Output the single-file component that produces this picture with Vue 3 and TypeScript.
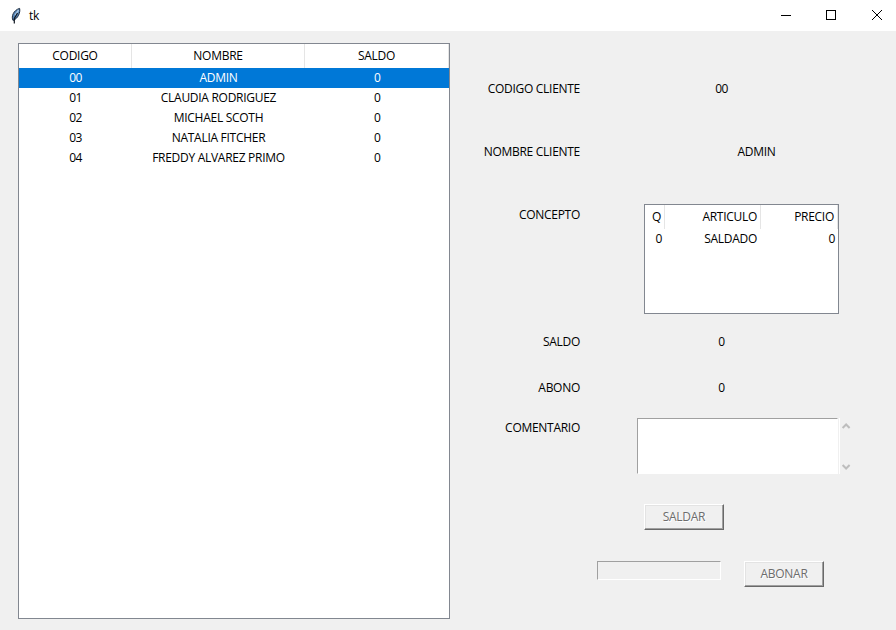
<script setup lang="ts">
interface Cliente {
  codigo: string
  nombre: string
  saldo: number
}

const clientes: Cliente[] = [
  { codigo: '00', nombre: 'ADMIN', saldo: 0 },
  { codigo: '01', nombre: 'CLAUDIA RODRIGUEZ', saldo: 0 },
  { codigo: '02', nombre: 'MICHAEL SCOTH', saldo: 0 },
  { codigo: '03', nombre: 'NATALIA FITCHER', saldo: 0 },
  { codigo: '04', nombre: 'FREDDY ALVAREZ PRIMO', saldo: 0 },
]
const selected = clientes[0]
</script>

<template>
  <div class="window">
    <header class="titlebar">
      <svg class="feather" width="12" height="18" viewBox="0 0 12 18">
        <path d="M3 13.4C1 9.6 3.4 3.2 9.6 1.4C10.6 5.4 8 11.6 3 13.4Z" fill="#5584b5" stroke="#1d2c40" stroke-width="1" />
        <path d="M5 8.5L8.6 3" stroke="#a9c8e6" stroke-width="1.4" fill="none" />
        <path d="M4.3 16.4V11.5L7.5 6" stroke="#10161f" stroke-width="1.2" fill="none" />
      </svg>
      <span class="title">tk</span>
      <div class="controls">
        <svg width="46" height="31" viewBox="0 0 46 31"><path d="M18 15.5H28" stroke="#000" /></svg>
        <svg width="46" height="31" viewBox="0 0 46 31"><rect x="17.5" y="10.5" width="9" height="9" fill="none" stroke="#000" /></svg>
        <svg width="46" height="31" viewBox="0 0 46 31"><path d="M17 10L27 20M27 10L17 20" stroke="#000" /></svg>
      </div>
    </header>

    <main class="client">
      <section class="tree clients">
        <div class="head">
          <span>CODIGO</span><span>NOMBRE</span><span>SALDO</span>
        </div>
        <div v-for="c in clientes" :key="c.codigo" class="item" :class="{ selected: c === selected }">
          <span class="digits">{{ c.codigo }}</span><span>{{ c.nombre }}</span><span class="digits">{{ c.saldo }}</span>
        </div>
      </section>

      <section class="form">
        <div class="field code">
          <span class="label">CODIGO CLIENTE</span><span class="value digits">{{ selected.codigo }}</span>
        </div>
        <div class="field customer">
          <span class="label">NOMBRE CLIENTE</span><span class="value wide">{{ selected.nombre }}</span>
        </div>
        <div class="field concept">
          <span class="label">CONCEPTO</span>
          <div class="tree articles">
            <div class="head"><span>Q</span><span>ARTICULO</span><span>PRECIO</span></div>
            <div class="item"><span>0</span><span>SALDADO</span><span>0</span></div>
          </div>
        </div>
        <div class="field balance">
          <span class="label">SALDO</span><span class="value">0</span>
        </div>
        <div class="field payment">
          <span class="label">ABONO</span><span class="value">0</span>
        </div>
        <div class="field comment">
          <span class="label">COMENTARIO</span>
          <div class="textbox"></div>
          <div class="scroll">
            <svg width="10" height="8" viewBox="0 0 10 8"><path d="M1.6 6L5.1 2.5L8.6 6" fill="none" stroke="#bdbdbd" stroke-width="2" /></svg>
            <svg width="10" height="8" viewBox="0 0 10 8"><path d="M1.6 2L5.1 5.5L8.6 2" fill="none" stroke="#bdbdbd" stroke-width="2" /></svg>
          </div>
        </div>
        <div class="settle"><div class="button">SALDAR</div></div>
        <div class="pay"><div class="entry"></div><div class="button">ABONAR</div></div>
      </section>
    </main>
  </div>
</template>

<style>
body {
  margin: 0;
  background: #f0f0f0;
}
</style>

<style scoped>
.window {
  box-sizing: border-box;
  width: 896px;
  height: 630px;
  display: flex;
  flex-direction: column;
  overflow: hidden;
  background: #f0f0f0;
  color: #000;
  font: 12px/20px 'Open Sans', 'Noto Sans', sans-serif;
  letter-spacing: -0.28px;
  white-space: nowrap;
}
.window * {
  box-sizing: border-box;
}
.titlebar {
  height: 31px;
  flex: none;
  display: flex;
  align-items: center;
  padding-left: 10px;
  background: #fff;
}
.feather {
  flex: none;
}
.title {
  margin-left: 7px;
}
.controls {
  display: flex;
  margin-left: auto;
  margin-right: -5px;
}
.client {
  flex: 1;
  display: flex;
  padding: 12px 0 11px 18px;
}
.tree {
  border: 1px solid #828790;
  background: #fff;
}
.head,
.item {
  display: grid;
}
.head {
  height: 24px;
  line-height: 24px;
}
.head span {
  border-right: 1px solid #e5e5e5;
}
.item {
  height: 20px;
}
.digits {
  letter-spacing: -0.7px;
}
.clients {
  width: 432px;
  flex: none;
  text-align: center;
}
.clients .head,
.clients .item {
  grid-template-columns: 113px 173px 144px;
}
.selected {
  background: #0078d7;
  color: #fff;
}
.form {
  flex: 1;
  padding-top: 36px;
}
.field {
  display: flex;
}
.label {
  width: 130px;
  flex: none;
  text-align: right;
}
.value {
  width: 155px;
  margin-left: 64px;
  text-align: center;
}
.wide {
  width: 225px;
}
.customer {
  margin-top: 43px;
}
.concept {
  margin-top: 42px;
}
.concept .label {
  padding-top: 1px;
}
.articles {
  width: 195px;
  height: 110px;
  margin-left: 64px;
  text-align: right;
}
.articles .head,
.articles .item {
  grid-template-columns: 20px 96px 77px;
}
.articles span {
  padding-right: 3px;
}
.articles .item span {
  padding-right: 4px;
}
.articles .item span:first-child,
.articles .item span:last-child {
  padding-right: 3px;
}
.balance {
  margin-top: 18px;
}
.payment {
  margin-top: 26px;
}
.comment {
  margin-top: 20px;
}
.textbox {
  width: 201px;
  height: 56px;
  margin-left: 57px;
  background: #fff;
  border: 1px solid;
  border-color: #a0a0a0 #fff #fff #a0a0a0;
}
.scroll {
  height: 56px;
  margin-left: 1px;
  padding: 4px 0 3px 1px;
  border-left: 1px solid #fff;
  display: flex;
  flex-direction: column;
  justify-content: space-between;
}
.button {
  width: 80px;
  height: 26px;
  border: 1px solid;
  border-color: #fff #696969 #696969 #fff;
  box-shadow: inset -1px -1px #a0a0a0, inset 1px 1px #e3e3e3;
  color: #6d6d6d;
  text-shadow: 1px 1px #fff;
  line-height: 24px;
  text-align: center;
}
.settle {
  margin: 30px 0 0 194px;
}
.pay {
  display: flex;
  gap: 23px;
  margin: 31px 0 0 147px;
}
.entry {
  width: 124px;
  height: 19px;
  border: 1px solid;
  border-color: #a0a0a0 #fff #fff #a0a0a0;
}
</style>
